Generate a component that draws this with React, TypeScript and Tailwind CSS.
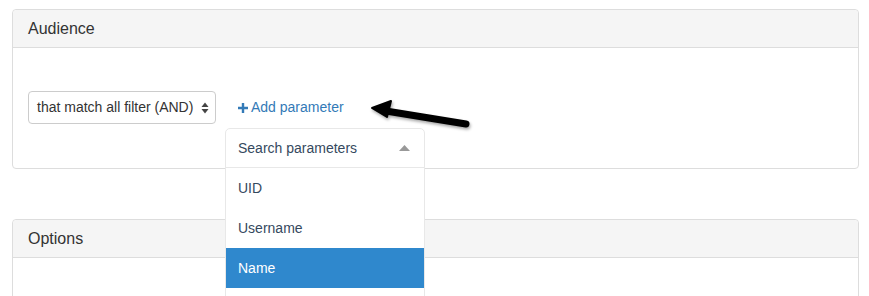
import React from 'react';

const items = ['UID', 'Username', 'Name'];

const Panel: React.FC<{ title: string; children?: React.ReactNode; bodyClass?: string }> = ({ title, children, bodyClass }) => (
  <div className="border border-[#dddddd] rounded-[4px] bg-white">
    <div className="h-[38px] bg-[#f5f5f5] border-b border-[#dddddd] rounded-t-[4px] flex items-center px-[15px]">
      <h3 className="text-[16px] text-[#333333] leading-none">{title}</h3>
    </div>
    <div className={bodyClass}>{children}</div>
  </div>
);

export default function App() {
  return (
    <div className="relative w-[869px] h-[296px] overflow-hidden bg-white font-['Liberation_Sans',Arial,sans-serif]">
      <div className="pl-[12px] pr-[10px] pt-[9px] flex flex-col gap-[50px]">
        <Panel title="Audience" bodyClass="h-[120px] pt-[43px] px-[15px]">
          <div className="flex items-center gap-[22px]">
            <div className="w-[188px] h-[33px] border border-[#cccccc] rounded-[4px] flex items-center justify-between pl-[8px] pr-[6px] text-[14px] text-[#333333]">
              <span>that match all filter (AND)</span>
              <svg width="8" height="12" viewBox="0 0 8 12">
                <path d="M4 0.5 L7.5 5 H0.5 Z" fill="#444" />
                <path d="M4 11.5 L7.5 7 H0.5 Z" fill="#444" />
              </svg>
            </div>
            <div className="flex items-center gap-[3px] text-[14px] text-[#337ab7]">
              <svg width="10" height="10" viewBox="0 0 10 10">
                <path d="M3.8 0 H6.2 V3.8 H10 V6.2 H6.2 V10 H3.8 V6.2 H0 V3.8 H3.8 Z" fill="#337ab7" />
              </svg>
              <span>Add parameter</span>
            </div>
          </div>
        </Panel>
        <Panel title="Options" bodyClass="h-[80px]" />
      </div>

      {/* dropdown */}
      <div className="absolute left-[225px] top-[128px] w-[200px] bg-white border border-[#e8e8e8] rounded-t-[5px] text-[14px] text-[#35495e]">
        <div className="h-[39px] border-b border-[#e8e8e8] flex items-center justify-between pl-[12px] pr-[14px]">
          <span>Search parameters</span>
          <svg width="11" height="6" viewBox="0 0 11 6">
            <path d="M5.5 0 L11 6 H0 Z" fill="#999999" />
          </svg>
        </div>
        {items.map((it) => (
          <div
            key={it}
            className={
              it === 'Name'
                ? 'h-[40px] flex items-center px-[12px] bg-[#2f88cd] text-white'
                : 'h-[40px] flex items-center px-[12px]'
            }
          >
            {it}
          </div>
        ))}
        <div className="h-[40px]" />
      </div>

      {/* annotation arrow */}
      <svg className="absolute left-0 top-0" width="869" height="296" viewBox="0 0 869 296">
        <defs>
          <filter id="sh" x="-20%" y="-50%" width="140%" height="200%">
            <feDropShadow dx="1" dy="2" stdDeviation="1.5" floodColor="#000" floodOpacity="0.35" />
          </filter>
        </defs>
        <g filter="url(#sh)">
          <line x1="386" y1="111" x2="466" y2="124" stroke="#000" strokeWidth="7" strokeLinecap="round" />
          <path d="M372 108 L391 101 L387 117 Z" fill="#000" stroke="#000" strokeWidth="2" strokeLinejoin="round" />
        </g>
      </svg>
    </div>
  );
}
